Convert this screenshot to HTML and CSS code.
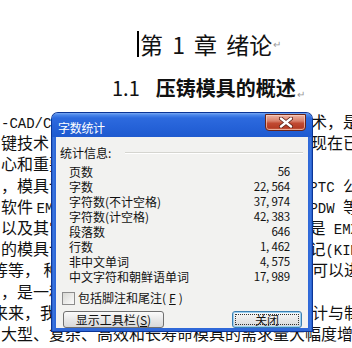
FILE: index.html
```html
<!DOCTYPE html>
<html lang="zh-CN">
<head>
  <meta charset="UTF-8" />
  <title>字数统计</title>
  <link rel="stylesheet" href="styles.css">
</head>
<body>

  <main class="doc">
    <h1 class="chapter"><span class="caret"></span>第 1 章 绪论<span class="ret">↵</span></h1>
    <h2 class="section"><span class="num">1.1</span>压铸模具的概述<span class="ret">↵</span></h2>

    <div class="text">
      <p class="line"><span><span class="lat">-CAD/CAM</span>技术在模具</span><span>技术，是</span></p>
      <p class="line"><span>键技术，模具</span><span>现在已</span></p>
      <p class="line"><span>心和重要</span><span></span></p>
      <p class="line"><span>，模具设计</span><span>和<span class="lat"> PTC </span>公</span></p>
      <p class="line"><span>软件 <span class="lat">EMX</span></span><span><span class="lat">PDW </span>等</span></p>
      <p class="line"><span>以及其它</span><span>是<span class="lat"> EMX</span></span></p>
      <p class="line"><span>的模具设</span><span>记<span class="lat">(KIM</span></span></p>
      <p class="line shift"><span>等等， 种类</span><span>可以进</span></p>
      <p class="line"><span>，是一种</span><span></span></p>
      <p class="line shift"><span>来来，我国</span><span>计与制</span></p>
      <p class="line"><span>大型、复杂、高效和长寿命模具的需求量大幅度增</span><span></span></p>
    </div>
  </main>

  <!-- Word count dialog -->
  <div class="dialog" role="dialog" aria-label="字数统计">
    <div class="titlebar">
      <span class="title">字数统计</span>
      <button class="close-btn" aria-label="关闭">
        <svg width="14" height="11" viewBox="0 0 14 11">
          <path d="M2 1.5 L12 9.5 M12 1.5 L2 9.5" stroke="#5a1e14" stroke-width="4" stroke-linecap="round" />
          <path d="M2 1.5 L12 9.5 M12 1.5 L2 9.5" stroke="#ffffff" stroke-width="2.4" stroke-linecap="round" />
        </svg>
      </button>
    </div>

    <div class="dlg-body">
      <div class="group-head">
        <span>统计信息:</span>
        <span class="rule"></span>
      </div>

      <dl class="stats">
        <dt>页数</dt><dd>56</dd>
        <dt>字数</dt><dd>22, 564</dd>
        <dt>字符数(不计空格)</dt><dd>37, 974</dd>
        <dt>字符数(计空格)</dt><dd>42, 383</dd>
        <dt>段落数</dt><dd>646</dd>
        <dt>行数</dt><dd>1, 462</dd>
        <dt>非中文单词</dt><dd>4, 575</dd>
        <dt>中文字符和朝鲜语单词</dt><dd>17, 989</dd>
      </dl>

      <label class="check"><span class="box"></span>包括脚注和尾注(<u>F</u>)</label>

      <div class="buttons">
        <button class="btn btn-toolbar">显示工具栏(<u>S</u>)</button>
        <button class="btn btn-default"><span class="focus">关闭</span></button>
      </div>
    </div>
  </div>

</body>
</html>
```

FILE: styles.css
```css
/* Base */
body {
  margin: 0;
  width: 352px;
  height: 348px;
  overflow: hidden;
  background: #ffffff;
  color: #111;
  font-family: "Noto Sans CJK SC", "Noto Sans", sans-serif;
  position: relative;
}

/* Document page behind the dialog */
.doc {
  padding-top: 30px;
}
.chapter {
  margin: 0;
  padding-left: 137px;
  font-size: 23px;
  font-weight: 400;
  line-height: 28px;
  height: 28px;
  word-spacing: 4px;
  white-space: nowrap;
  display: flex;
  align-items: center;
}
.caret {
  display: inline-block;
  width: 2px;
  height: 26px;
  background: #000;
  margin-right: 1px;
}
.section {
  margin: 18px 0 0;
  padding-left: 112px;
  font-size: 20px;
  font-weight: 700;
  line-height: 24px;
  height: 24px;
  white-space: nowrap;
}
.section .num {
  font-weight: 400;
  margin-right: 16px;
}
.ret {
  font-size: 10px;
  font-weight: 400;
  line-height: 0;
  color: #9a9a9a;
  margin-left: 1px;
  vertical-align: -2px;
}

.text {
  margin-top: 11px;
}
.line {
  margin: 0;
  width: 358px;
  padding-left: 1px;
  height: 21.2px;
  line-height: 21.2px;
  font-size: 16px;
  display: flex;
  justify-content: space-between;
  white-space: nowrap;
  overflow: hidden;
}
.line.shift {
  margin-left: -9px;
  width: 368px;
}
.lat {
  font-family: "Liberation Mono", monospace;
  font-size: 14px;
}

/* Dialog window */
.dialog {
  position: absolute;
  left: 52px;
  top: 113px;
  width: 260px;
  height: 218px;
  box-sizing: border-box;
  padding: 0 4px 4px;
  border-radius: 6px 6px 0 0;
  background: linear-gradient(90deg, #1b4fc0 0, #3d78e0 1px, #2f68d8 3px, #2f68d8 calc(100% - 3px), #3d78e0 calc(100% - 1px), #1b4fc0 100%);
  box-shadow: 0 0 0 1px #0b3596;
  display: flex;
  flex-direction: column;
}
.titlebar {
  height: 24px;
  flex-shrink: 0;
  margin: 0 -4px;
  padding: 0 6px 0 6px;
  border-radius: 6px 6px 0 0;
  background: linear-gradient(#7aa8f2 0, #4a86ea 2px, #2d6ade 5px, #2562d8 14px, #1f5acf 100%);
  display: flex;
  align-items: flex-start;
  justify-content: space-between;
}
.title {
  color: #fff;
  font-size: 12px;
  line-height: 12px;
  margin-top: 9px;
  letter-spacing: -0.3px;
}
.close-btn {
  margin: 1px 0 0;
  width: 41px;
  height: 17px;
  padding: 0;
  border: 1px solid #6b2418;
  border-radius: 0 0 4px 4px;
  background: linear-gradient(#eeb4a4 0, #d8806a 40%, #c14a32 55%, #b43c24 85%, #d06a4c 100%);
  box-shadow: inset 0 0 0 1px rgba(255, 220, 205, 0.6);
  display: flex;
  align-items: center;
  justify-content: center;
}

.dlg-body {
  flex: 1;
  background: #f2f2f0;
  padding: 8px 0 0 4px;
  font-size: 12px;
  color: #111;
  display: flex;
  flex-direction: column;
}
.group-head {
  display: flex;
  align-items: center;
  height: 15px;
  line-height: 15px;
}
.group-head .rule {
  flex: 1;
  height: 0;
  border-top: 1px solid #d5d5d0;
  border-bottom: 1px solid #ffffff;
  margin: 0 5px 0 14px;
}

.stats {
  margin: 4px 0 0;
  padding: 0 18px 0 9px;
  display: grid;
  grid-template-columns: 1fr auto;
  grid-auto-rows: 15px;
  line-height: 15px;
}
.stats dt,
.stats dd {
  margin: 0;
  white-space: nowrap;
}
.stats dd {
  text-align: right;
  font-size: 11.5px;
  letter-spacing: -0.2px;
}

.check {
  margin: 7px 0 0 2px;
  height: 14px;
  display: flex;
  align-items: center;
  gap: 3px;
  line-height: 14px;
}
.check .box {
  width: 11px;
  height: 11px;
  border: 1px solid #8c8c8c;
  background: linear-gradient(135deg, #d8d8d4, #fbfbfb);
}

.buttons {
  margin-top: 6px;
  display: flex;
  justify-content: space-between;
  padding: 0 6px 0 3px;
}
.btn {
  height: 17px;
  padding: 0;
  border: 1px solid #707070;
  border-radius: 3px;
  background: linear-gradient(#fbfbfb, #e8e8e8 50%, #d8d8d8);
  font-family: "Noto Sans CJK SC", sans-serif;
  font-size: 12px;
  line-height: 13px;
  color: #111;
  box-sizing: border-box;
}
.btn-toolbar {
  width: 101px;
}
.btn-default {
  width: 70px;
  border-color: #3c7fb1;
  box-shadow: inset 0 0 0 1px #9ad0f2;
  padding: 2px;
  display: flex;
}
.btn-default .focus {
  flex: 1;
  border: 1px dotted #333;
  line-height: 9px;
  display: flex;
  align-items: center;
  justify-content: center;
}
```
